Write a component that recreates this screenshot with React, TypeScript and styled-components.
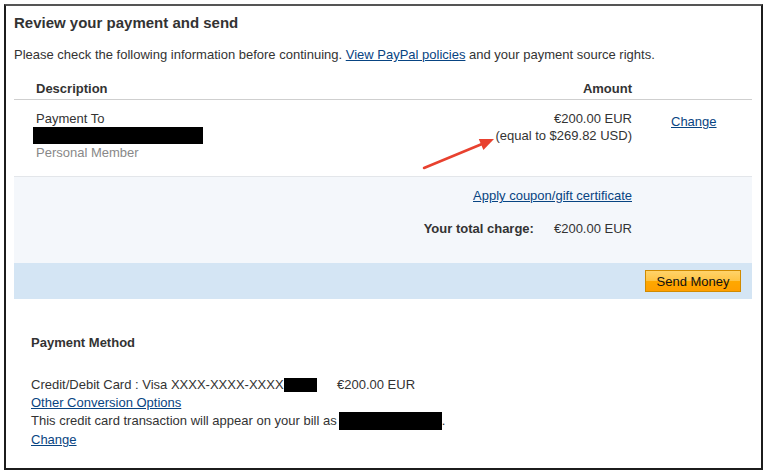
import React from "react";
import styled, { createGlobalStyle } from "styled-components";

const Global = createGlobalStyle`
  html, body { margin: 0; padding: 0; background: #fff; }
  body { font-family: "Liberation Sans", Arial, sans-serif; color: #333; }
`;

const Frame = styled.div`
  position: relative;
  box-sizing: border-box;
  margin: 4px 0 0 4px;
  width: 759px;
  height: 466px;
  border: 2px solid #1c1c1c;
  border-top-color: #555;
  padding: 7px 9px 0 8px;
`;

const Title = styled.h1`
  margin: 0;
  font-size: 15px;
  font-weight: bold;
  line-height: 20px;
  color: #333;
`;

const Intro = styled.p`
  margin: 14px 0 0;
  font-size: 13px;
  line-height: 16px;
`;

const Link = styled.a`
  color: #084482;
  text-decoration: underline;
  cursor: pointer;
`;

const HeaderRow = styled.div`
  display: flex;
  justify-content: space-between;
  margin-top: 18px;
  padding: 0 120px 2px 22px;
  border-bottom: 1px solid #cfcfcf;
  font-size: 13px;
  font-weight: bold;
  line-height: 16px;
`;

const ItemRow = styled.div`
  display: grid;
  grid-template-columns: 1fr auto 120px;
  padding: 10px 0 0 22px;
  height: 66px;
  border-bottom: 1px solid #e3e6ea;
  font-size: 13px;
  line-height: 17px;
`;

const Stack = styled.div<{ $align?: string }>`
  display: flex;
  flex-direction: column;
  align-items: ${(p) => p.$align || "flex-start"};
`;

const Redacted = styled.span<{ $w: number; $h?: number }>`
  display: inline-block;
  width: ${(p) => p.$w}px;
  height: ${(p) => p.$h || 16}px;
  background: #000;
  vertical-align: middle;
`;

const Muted = styled.span`
  color: #888;
`;

const ChangeCell = styled.div`
  padding: 3px 0 0 39px;
`;

const Summary = styled.div`
  background: #f4f7fb;
  height: 86px;
  padding: 10px 120px 0 0;
  box-sizing: border-box;
  display: flex;
  flex-direction: column;
  align-items: flex-end;
  font-size: 13px;
  line-height: 17px;
`;

const TotalRow = styled.div`
  display: flex;
  gap: 20px;
  margin-top: 16px;
`;

const TotalLabel = styled.span`
  font-weight: bold;
`;

const ActionBar = styled.div`
  background: #d4e5f4;
  height: 36px;
  display: flex;
  align-items: center;
  justify-content: flex-end;
  padding-right: 11px;
`;

const SendButton = styled.button`
  width: 96px;
  height: 22px;
  border: 1px solid #d08a00;
  background: linear-gradient(#ffd36a 0%, #ffc445 48%, #ffa800 52%, #ff9f00 100%);
  font-family: "Liberation Sans", Arial, sans-serif;
  font-size: 13px;
  color: #111;
  padding: 0;
  cursor: pointer;
`;

const MethodSection = styled.div`
  padding: 35px 0 0 17px;
  font-size: 13px;
  line-height: 18px;
`;

const MethodTitle = styled.div`
  font-weight: bold;
  margin-bottom: 24px;
`;

const CardLine = styled.div`
  display: flex;
  align-items: center;
`;

const CardAmount = styled.span`
  margin-left: 20px;
`;

const Line = styled.div`
  display: flex;
  align-items: center;
`;

const ChangeLine = styled.div`
  margin-top: 1px;
`;

const Arrow = styled.svg`
  position: absolute;
  left: 409px;
  top: 125px;
  overflow: visible;
`;

export default function App() {
  return (
    <>
      <Global />
      <Frame>
        <Title>Review your payment and send</Title>
        <Intro>
          Please check the following information before continuing.{" "}
          <Link>View PayPal policies</Link> and your payment source rights.
        </Intro>
        <HeaderRow>
          <span>Description</span>
          <span>Amount</span>
        </HeaderRow>
        <ItemRow>
          <Stack>
            <span>Payment To</span>
            <Redacted $w={170} $h={17} style={{ marginLeft: -3 }} />
            <Muted>Personal Member</Muted>
          </Stack>
          <Stack $align="flex-end">
            <span>€200.00 EUR</span>
            <span>(equal to $269.82 USD)</span>
          </Stack>
          <ChangeCell>
            <Link>Change</Link>
          </ChangeCell>
        </ItemRow>
        <Summary>
          <Link>Apply coupon/gift certificate</Link>
          <TotalRow>
            <TotalLabel>Your total charge:</TotalLabel>
            <span>€200.00 EUR</span>
          </TotalRow>
        </Summary>
        <ActionBar>
          <SendButton>Send Money</SendButton>
        </ActionBar>
        <MethodSection>
          <MethodTitle>Payment Method</MethodTitle>
          <CardLine>
            <span>Credit/Debit Card : Visa XXXX-XXXX-XXXX-</span>
            <Redacted $w={33} $h={14} style={{ marginLeft: -4 }} />
            <CardAmount>€200.00 EUR</CardAmount>
          </CardLine>
          <div>
            <Link>Other Conversion Options</Link>
          </div>
          <Line>
            <span>This credit card transaction will appear on your bill as</span>
            <Redacted $w={103} $h={18} style={{ marginLeft: 2 }} />
            <span>.</span>
          </Line>
          <ChangeLine>
            <Link>Change</Link>
          </ChangeLine>
        </MethodSection>
        <Arrow width="90" height="45" viewBox="0 0 90 45">
          <line x1="9" y1="37" x2="67" y2="13" stroke="#e8412f" strokeWidth="2.5" strokeLinecap="round" />
          <polygon points="79,8 63.8,7.9 68.4,18.9" fill="#e8412f" />
        </Arrow>
      </Frame>
    </>
  );
}
